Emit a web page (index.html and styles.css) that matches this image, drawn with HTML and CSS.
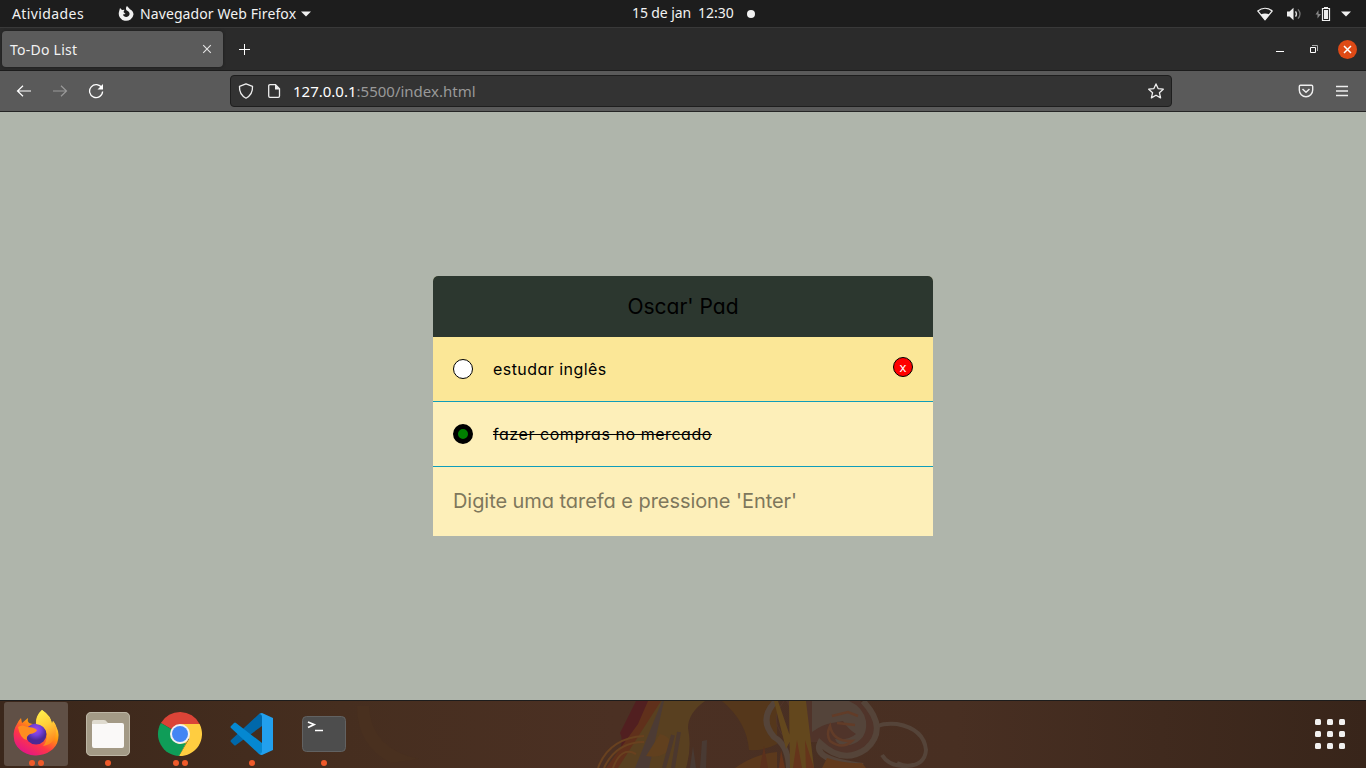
FILE: index.html
```html
<!DOCTYPE html>
<html lang="pt-BR">
<head>
<meta charset="utf-8">
<title>To-Do List</title>
<link rel="stylesheet" href="styles.css">
</head>
<body>
<header class="topbar">
  <div class="topbar-left">
    <span class="activities">Atividades</span>
    <svg class="app-icon" width="16" height="18" viewBox="0 0 16 18"><path d="M9 1l3 3.200C14.300 5.500 15.500 7.300 15.500 9.500A7.400 7.200 0 1 1 1 6.800L2 3l2 2 2.500-.2L5.500 7 7.500 9l-2.500.5c.4 3.200 5.800 3.400 6.500 0 .4-2-.9-3.200-3-4.200C7.500 3.700 8 2 9 1z" fill="#f0f0f0"/></svg>
    <span class="app-name">Navegador Web Firefox</span>
    <svg width="10" height="6" viewBox="0 0 10 6"><path d="M0 .5h10L5 5.500z" fill="#f0f0f0"/></svg>
  </div>
  <div class="clock"><span class="date">15 de jan</span><span class="time">12:30</span><i class="notice"></i></div>
  <div class="topbar-right">
    <svg width="16" height="14" viewBox="0 0 16 14"><path d="M.8 4C5 .3 11 .3 15.200 4L8 12.800z" fill="none" stroke="#eee" stroke-width="1.200"/><path d="M3.500 7.500Q8 5.300 12.500 7.500L8 13z" fill="#eee"/></svg>
    <svg width="16" height="14" viewBox="0 0 16 14"><path d="M1 4.500h2.500L7.500.8v12.400l-4-3.700H1z" fill="#eee"/><path d="M9.500 4.300q2 2.700 0 5.400" fill="none" stroke="#ddd" stroke-width="1.300"/><path d="M12 2.300q4 4.700 0 9.400" fill="none" stroke="#777" stroke-width="1.300"/></svg>
    <svg width="16" height="16" viewBox="0 0 16 16"><path d="M3.500 4v4H6l-3.500 4.500v-4H.5z" fill="#888"/><path d="M7.500 2.500h7v12h-7z" fill="none" stroke="#eee" stroke-width="1.200"/><path d="M9 1h4v2H9zM9 4h4v9H9z" fill="#eee"/></svg>
    <svg width="10" height="6" viewBox="0 0 10 6"><path d="M0 .5h10L5 5.500z" fill="#f0f0f0"/></svg>
  </div>
</header>
<div class="tabs">
  <div class="tab"><span class="tab-title">To-Do List</span><svg width="10" height="10" viewBox="0 0 10 10"><path d="M1.200 1.200l7.600 7.600M8.800 1.200L1.200 8.800" stroke="#e5e5e5" stroke-width="1.100"/></svg></div>
  <svg class="new-tab" width="13" height="13" viewBox="0 0 13 13"><path d="M6.500 1v11M1 6.500h11" stroke="#fff"/></svg>
  <div class="window-buttons">
    <svg width="10" height="10" viewBox="0 0 10 10"><path d="M1 7h8v1H1z" fill="#fff"/></svg>
    <svg width="10" height="10" viewBox="0 0 10 10"><path d="M1.500 3.500h5v5h-5z" fill="none" stroke="#fff"/><path d="M3 1.500h5.500V7" fill="none" stroke="#aaa"/></svg>
    <span class="close"><svg width="9" height="9" viewBox="0 0 9 9"><path d="M1 1l7 7M8 1L1 8" stroke="#fff" stroke-width="1.500"/></svg></span>
  </div>
</div>
<nav class="toolbar">
  <div class="nav-buttons">
    <svg width="16" height="16" viewBox="0 0 16 16"><path d="M15 8H1.800M7 2.700L1.500 8 7 13.300" fill="none" stroke="#fff" stroke-width="1.200"/></svg>
    <svg width="16" height="16" viewBox="0 0 16 16"><path d="M1 8h13.200M9 2.700L14.500 8 9 13.300" fill="none" stroke="#999" stroke-width="1.200"/></svg>
    <svg width="16" height="16" viewBox="0 0 16 16"><path d="M13.800 5A6.500 6.500 0 1 0 14.600 8.500" fill="none" stroke="#fff" stroke-width="1.300"/><path d="M15 1v5.500H9.500z" fill="#fff"/></svg>
  </div>
  <div class="urlbar">
    <svg width="16" height="16" viewBox="0 0 16 16"><path d="M8 .8L14.500 3.300Q15 11.500 8 15.200 1 11.500 1.500 3.300z" fill="none" stroke="#eee" stroke-width="1.300" stroke-linejoin="round"/></svg>
    <svg class="page-icon" width="16" height="16" viewBox="0 0 16 16"><path d="M4 1.700h5.500l4 4V13q0 1.300-1.300 1.300H4Q2.700 14.300 2.700 13V3Q2.700 1.700 4 1.700z" fill="none" stroke="#eee" stroke-width="1.300"/><path d="M9 1.500l5 5H9z" fill="#eee"/></svg>
    <span class="url"><b>127.0.0.1</b>:5500/index.html</span>
    <svg class="star" width="16" height="16" viewBox="0 0 16 16"><path d="M8 .9l2.100 4.700 5.200.6-3.900 3.500 1.200 5.200L8 12.200l-4.600 2.700 1.200-5.200L.7 6.200l5.200-.6z" fill="none" stroke="#eee" stroke-width="1.300" stroke-linejoin="round"/></svg>
  </div>
  <div class="tools">
    <svg width="16" height="16" viewBox="0 0 16 16"><path d="M2.500 2.300h11q1.200 0 1.200 1.200V7A6.700 6.700 0 0 1 1.300 7V3.500q0-1.200 1.200-1.200z" fill="none" stroke="#eee" stroke-width="1.400"/><path d="M4.500 6L8 9.300 11.500 6" fill="none" stroke="#eee" stroke-width="1.500"/></svg>
    <svg width="14" height="16" viewBox="0 0 14 16"><path d="M1 3.500h12M1 8h12M1 12.500h12" stroke="#eee" stroke-width="1.300"/></svg>
  </div>
</nav>
<main class="page">
  <section class="pad">
    <h1 class="pad-title">Oscar' Pad</h1>
    <div class="task hovered"><span class="check"></span><span class="task-text first-task">estudar inglês</span><button class="remove">x</button></div>
    <div class="task"><span class="check checked"></span><span class="task-text done">fazer compras no mercado</span></div>
    <div class="entry"><span class="hint">Digite uma tarefa e pressione 'Enter'</span></div>
  </section>
</main>
<footer class="dock">
  <svg class="wallpaper" width="1366" height="67" viewBox="0 0 1366 67">
    <defs><linearGradient id="wall"><stop stop-color="#3b271b"/><stop offset=".25" stop-color="#462e1f"/><stop offset=".45" stop-color="#4b3023"/><stop offset=".7" stop-color="#482f22"/><stop offset="1" stop-color="#38251a"/></linearGradient></defs>
    <path d="M0 0h1366v67H0z" fill="url(#wall)"/>
    <path d="M357 5q0 40 34 57l28-4q-48-10-50-53z" fill="#49301f"/>
    <path d="M636 0h18l-34 67h-8q14-26 8-35z" fill="#511f20"/>
    <path d="M648 0h14l-40 67h-16l32-44z" fill="#60301b"/>
    <path d="M661 0h44q-17 12-17 27 4 20-2 40h-68z" fill="#594020"/>
    <path d="M662 0h2l-15 67h-14z" fill="#4c3b34"/><path d="M660 33q13 3 10 14-6 11-24 8z" fill="#61401e"/>
    <path d="M673 34l-9 33M679 31l-6 36" stroke="#4c382e" stroke-width="4"/>
    <path d="M722 0h55v43q-13 7-28 6-2-28-27-49z" fill="#55371b"/>
    <path d="M735 67q20-14 42-16v16z" fill="#5c391c"/><path d="M764 45l4 22h-8z" fill="#5b301c"/>
    <path d="M702 40l5-1-1 28h-6zM693 45l3 22h-6z" fill="#493a33"/>
    <g fill="none" stroke="#69411f" stroke-width="2"><path d="M598 67q11-30 46-32M604 67q12-26 40-26M613 67q8-22 23-14"/></g>
    <path d="M786 0h74q14 8 16 23 0 20-18 27-24 9-38-9h-10z" fill="#50342a"/>
    <path d="M812 0h37q14 6 17 20 2 19-16 24-12 2-15-6 13 2 21-5-8-5-13-13l-11 2q-9 1-20 9z" fill="#54443a"/>
    <path d="M830 25q3 16 22 15-10 9-22 0-4-7 0-15zM832 15l16-4 10 4M837 22l18 2" fill="none" stroke="#623c28" stroke-width="2.500"/>
    <path d="M776 0q-18 18-2 36 14 8 15 31M863 0q26 28 3 48-23 16-46-6-8 17 43 23" fill="none" stroke="#554439" stroke-width="6"/>
    <path d="M784 0q-14 16-3 32 14 12 12 35" fill="none" stroke="#51352b"/>
    <path d="M878 25q6-3 19-2 27 5 29 26-1 17-24 16-14-1-20-11M897 62q8 4 16 2" fill="none" stroke="#554439" stroke-width="4"/>
    <path d="M827 57q18 6 35 5l4 5h-44z" fill="#623a1c"/>
    <path d="M789 0h17l8 67h-24zM774 0h4l13 38-5 10z" fill="#63471d"/><path d="M797 39l5 28h-9zM805 39l9 28h-8zM781 49l4 18h-6z" fill="#65341b"/>
  </svg>
  <div class="apps">
    <div class="app active">
      <svg width="48" height="48" viewBox="0 0 48 48"><defs><linearGradient id="fx" x1=".85" y1=".1" x2=".3" y2="1"><stop stop-color="#fff44f"/><stop offset=".38" stop-color="#ff980e"/><stop offset=".68" stop-color="#ff3647"/><stop offset="1" stop-color="#e31587"/></linearGradient><linearGradient id="flame" x2=".3" y2="1"><stop stop-color="#fff44f"/><stop offset=".5" stop-color="#ffd03a"/><stop offset="1" stop-color="#ff8a20"/></linearGradient><radialGradient id="globe" cx=".5" cy=".3"><stop stop-color="#a746e8"/><stop offset=".5" stop-color="#7541dc"/><stop offset="1" stop-color="#4c2994"/></radialGradient></defs>
      <path d="M30 0q9 6 10 14l1-3q7 10 5.200 18A22.300 19 0 0 1 1.800 27Q1 20 5 14q2-4 4-6l1 5 6-5q-1 3 1 5l7 2Q23 6 30 0z" fill="url(#fx)"/><circle cx="24" cy="24" r="10.500" fill="url(#globe)"/><path d="M6 17q4-3 9 0 7 0 10 3-1 3-7 4-4 2-3 6-7-1-9-13z" fill="#ff8d20"/><path d="M30 0q-6 5-6 14 9 1 11 10 0 8-4 12 13-2 13-16 1-5-3-9l-1 3Q39 6 30 0z" fill="url(#flame)"/></svg>
      <span class="dots"><i></i><i></i></span>
    </div>
    <div class="app">
      <svg width="48" height="48" viewBox="0 0 48 48"><rect x="2" y="2" width="44" height="44" rx="5" fill="#a39a86"/><rect x="2.500" y="2.500" width="43" height="43" rx="4.500" fill="none" stroke="#bdb6a5"/><path d="M8 14v-2q0-2 2-2h10q2 0 3 2l2 2z" fill="#dfdbcf"/><path d="M8 14h13q2 0 3-1h14q2 0 2 2v21q0 2-2 2H10q-2 0-2-2z" fill="#faf9f8"/></svg>
      <span class="dots"><i></i></span>
    </div>
    <div class="app">
      <svg width="48" height="48" viewBox="0 0 48 48"><path d="M24 24L4.900 13A22 22 0 0 1 43.600 14H24z" fill="#db4437"/><path d="M24 24L23 46A22 22 0 0 1 4.900 13z" fill="#0f9d58"/><path d="M24 14h19.600A22 22 0 0 1 23 46l10-17z" fill="#ffcd40"/><path d="M23 46l9-16-12 2z" fill="#ffcd40"/><path d="M23 46l7-13-7 1-10-4z" fill="#0f9d58"/><circle cx="24" cy="24" r="10" fill="#f1f1f1"/><circle cx="24" cy="24" r="8" fill="#4285f4"/></svg>
      <span class="dots"><i></i><i></i></span>
    </div>
    <div class="app">
      <svg width="48" height="48" viewBox="0 0 48 48"><path d="M34 3v13L8 35q-1 1-2 0l-3-3q-1-1 0-2L31 4z" fill="#0068aa"/><path d="M34 45V33L8 13q-1-1-2 0l-3 3q-1 1 0 2l28 26z" fill="#0588d1"/><path d="M34 3l11 5v32l-11 5-3-1q3 0 3-3V7q0-3-3-3z" fill="#22a0ee"/></svg>
      <span class="dots"><i></i></span>
    </div>
    <div class="app">
      <svg width="48" height="48" viewBox="0 0 48 48"><rect x="2.500" y="6.500" width="43" height="35" rx="4" fill="#4d4d4d" stroke="#626262"/><path d="M8 12l6 2.500L8 17.500" fill="none" stroke="#fff" stroke-width="1.800"/><path d="M15 20.500h8" stroke="#fff" stroke-width="1.500"/></svg>
      <span class="dots"><i></i></span>
    </div>
  </div>
  <div class="app-grid"><i></i><i></i><i></i><i></i><i></i><i></i><i></i><i></i><i></i></div>
</footer>
</body>
</html>
```
FILE: styles.css
```css
* { box-sizing: border-box; }
body { margin: 0; width: 1366px; height: 768px; overflow: hidden; display: flex; flex-direction: column; font-family: "Noto Sans", "Open Sans", sans-serif; font-size: 14px; color: #f2f2f2; }
svg { display: block; flex: none; }

.topbar { height: 28px; background: #1d1d1d; border-bottom: 1px solid #393939; display: grid; grid-template-columns: 632px 1fr auto; align-items: center; line-height: 26px; white-space: nowrap; }
.topbar-left, .clock, .topbar-right { display: flex; align-items: center; }
.topbar-left { padding-left: 12px; }
.activities { width: 106px; letter-spacing: 0.4px; }
.app-icon { margin-right: 6px; }
.app-name { width: 161px; letter-spacing: 0.1px; }
.clock span { padding-bottom: 1px; }
.date { width: 66px; letter-spacing: -0.1px; }
.time { width: 49px; }
.notice { width: 8px; height: 8px; border-radius: 50%; background: #f2f2f2; }
.topbar-right { gap: 12px; padding-right: 15px; }
.topbar-right svg:first-child { margin-right: 1px; }
.topbar-right svg:nth-child(3) { margin: 0 -1px 0 1px; }
.topbar-right svg:last-child { margin-left: -1px; }

.tabs { height: 43px; background: #2b2b2b; border-bottom: 1px solid #1c1c1c; display: flex; align-items: center; padding: 0 9px 0 2px; }
.tab { width: 221px; height: 36px; border-radius: 4px; background: #5b5b5b; box-shadow: 0 0 3px #1b1b1b; padding: 0 11px 0 8px; display: flex; align-items: center; justify-content: space-between; }
.tab-title { letter-spacing: 0.25px; }
.new-tab { margin-left: 15px; }
.window-buttons { margin-left: auto; display: flex; align-items: center; gap: 24px; }
.close { width: 19px; height: 19px; margin-left: -5px; border-radius: 50%; background: #df4a16; display: flex; align-items: center; justify-content: center; }

.toolbar { height: 41px; background: #5a5a5a; border-bottom: 1px solid #252525; display: flex; align-items: center; padding: 0 17px 0 16px; }
.nav-buttons { width: 214px; display: flex; gap: 20px; }
.urlbar { width: 942px; height: 32px; border: 1px solid #1e1e1e; border-radius: 4px; background: #333; display: flex; align-items: center; padding: 0 7px; }
.page-icon { margin: 0 11px 0 12px; }
.url { color: #999; font-size: 15px; line-height: 28px; }
.url b { color: #fff; font-weight: 400; }
.star { margin-left: auto; }
.tools { margin-left: auto; display: flex; gap: 21px; }

.page { height: 588px; padding-top: 164px; background: #afb5ab; }
.pad { width: 500px; height: 260px; margin: 0 auto; border-radius: 5px 5px 0 0; overflow: hidden; background: #fdefb9; color: #000; font-family: Inter, "Open Sans", sans-serif; font-feature-settings: "cv11"; }
.pad-title { height: 61px; margin: 0; background: #2c372f; font-size: 21px; font-weight: 400; line-height: 62px; text-align: center; }
.task { height: 65px; border-bottom: 1px solid #109dba; display: flex; align-items: center; padding: 0 20px; font-size: 16px; }
.hovered { background: #fbe797; }
.check { width: 20px; height: 20px; margin-right: 20px; border: 1px solid #000; border-radius: 50%; background: #fff; }
.checked { border-width: 5px; background: #008000; }
.first-task { letter-spacing: 0.45px; }
.done { text-decoration: line-through; letter-spacing: 0.55px; }
.remove { width: 20px; height: 20px; margin: -4px 0 0 auto; padding: 0 0 1px; border: 1px solid #000; border-radius: 50%; background: #f00; color: #fff; font: 13px/16px "Noto Sans", sans-serif; }
.entry { height: 69px; padding: 0 20px; color: #7e775c; font-size: 20px; line-height: 69px; letter-spacing: -0.06px; white-space: nowrap; }

.dock { position: relative; height: 68px; border-top: 1px solid #1c1c1c; display: flex; justify-content: space-between; overflow: hidden; }
.wallpaper { position: absolute; inset: 0; }
.apps, .app-grid { position: relative; }
.apps { display: flex; gap: 8px; padding: 1px 4px; }
.app { width: 64px; height: 64px; padding: 8px 8px 0; border-radius: 3px; }
.active { background: #605046; }
.dots { height: 6px; margin-top: 2px; display: flex; justify-content: center; gap: 3px; }
.dots i { width: 6px; height: 6px; border-radius: 50%; background: #ef5a2a; }
.app-grid { display: grid; grid-template-columns: repeat(3, 6px); grid-auto-rows: 6px; gap: 6px; padding: 18px 21px 0 0; }
.app-grid i { border-radius: 1.5px; background: #f1f0ef; }
```
